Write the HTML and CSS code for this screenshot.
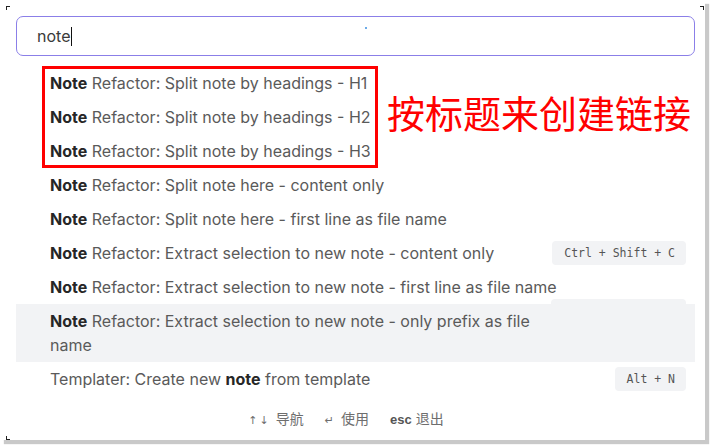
FILE: index.html
```html
<!DOCTYPE html>
<html>
<head>
<meta charset="utf-8">
<link rel="stylesheet" href="styles.css">
</head>
<body>
<div class="window">
  <span class="mark mark-tl"></span>
  <span class="mark mark-tr"></span>
  <span class="mark mark-bl"></span>
  <div class="search">
    <span class="query">note</span><span class="caret"></span>
    <span class="dot"></span>
  </div>
  <div class="list">
    <div class="item"><div class="text"><b>Note</b> Refactor: Split note by headings - H1</div></div>
    <div class="item"><div class="text"><b>Note</b> Refactor: Split note by headings - H2</div></div>
    <div class="item"><div class="text"><b>Note</b> Refactor: Split note by headings - H3</div></div>
    <div class="item"><div class="text"><b>Note</b> Refactor: Split note here - content only</div></div>
    <div class="item"><div class="text"><b>Note</b> Refactor: Split note here - first line as file name</div></div>
    <div class="item"><div class="text"><b>Note</b> Refactor: Extract selection to new note - content only</div><kbd class="key">Ctrl + Shift + C</kbd></div>
    <div class="item item-under"><div class="text nowrap"><b>Note</b> Refactor: Extract selection to new note - first line as file name</div><kbd class="key key-hidden"></kbd></div>
    <div class="item is-selected"><div class="text"><b>Note</b> Refactor: Extract selection to new note - only prefix as file name</div></div>
    <div class="item"><div class="text">Templater: Create new <b>note</b> from template</div><kbd class="key">Alt + N</kbd></div>
  </div>
  <div class="footer">
    <span class="hint"><span class="sym">↑↓</span>导航</span>
    <span class="hint"><span class="sym">↵</span>使用</span>
    <span class="hint"><b>esc</b>退出</span>
  </div>
  <div class="annot-box"></div>
  <div class="annot-text">按标题来创建链接</div>
</div>
</body>
</html>
```

FILE: styles.css
```css
html, body {
  margin: 0;
  padding: 0;
  background: #ffffff;
}
body {
  width: 712px;
  height: 447px;
  overflow: hidden;
  font-family: Inter, "Noto Sans CJK SC", sans-serif;
}
.window {
  position: relative;
  width: 705px;
  height: 440px;
  box-sizing: border-box;
  background: #ffffff;
  box-shadow: 4px 4px 1px #c9c9c9;
  padding: 16px 10px 0 16px;
}
.mark {
  position: absolute;
  width: 3px;
  height: 3px;
  border-color: #222;
  border-style: solid;
  border-width: 0;
}
.mark-tl { left: 6px; top: 6px; border-top-width: 1px; border-left-width: 1px; }
.mark-tr { left: 700px; top: 6px; border-top-width: 1px; border-right-width: 1px; }
.mark-bl { left: 6px; top: 436px; border-bottom-width: 1px; border-left-width: 1px; }

.search {
  position: relative;
  height: 40px;
  box-sizing: border-box;
  border: 1px solid #8b7fe8;
  border-radius: 7px;
  display: flex;
  align-items: center;
  padding-left: 20px;
  font-size: 16px;
  color: #3a3a3a;
}
.caret {
  display: inline-block;
  width: 1px;
  height: 19px;
  background: #111;
  margin-left: 1px;
}
.dot {
  position: absolute;
  left: 348px;
  top: 10px;
  width: 2px;
  height: 2px;
  border-radius: 50%;
  background: #3b8fe0;
}
.list {
  margin-top: 10px;
  display: flex;
  flex-direction: column;
}
.item {
  display: flex;
  align-items: flex-start;
  justify-content: space-between;
  padding: 5px 9px 5px 34px;
  font-size: 16px;
  line-height: 24px;
  color: #5a5a5a;
}
.item b {
  color: #262626;
  font-weight: 700;
}
.text {
  max-width: 500px;
}
.nowrap {
  white-space: nowrap;
}
.is-selected {
  background: #f2f3f5;
  position: relative;
}
.key {
  flex: none;
  font-family: "DejaVu Sans Mono", monospace;
  font-size: 11.5px;
  line-height: 24px;
  height: 24px;
  color: #555;
  background: #f2f3f5;
  border-radius: 4px;
  padding: 0 11px 0 12px;
}
.key-hidden {
  width: 112px;
  margin-top: 24px;
  margin-bottom: -29px;
}
.footer {
  display: flex;
  justify-content: center;
  gap: 21px;
  padding: 12px 19px 0 0;
  font-size: 14px;
  color: #6e6e6e;
  font-family: "Liberation Sans", "Noto Sans CJK SC", sans-serif;
}
.hint {
  display: flex;
  align-items: baseline;
}
.footer b {
  color: #555;
  font-size: 13px;
  margin-right: 4px;
}
.sym {
  font-family: "DejaVu Sans", sans-serif;
  font-size: 11px;
  letter-spacing: 2px;
  margin-right: 5px;
}
.annot-box {
  position: absolute;
  left: 42px;
  top: 66px;
  width: 336px;
  height: 102px;
  box-sizing: border-box;
  border: 3px solid #ff0000;
}
.annot-text {
  position: absolute;
  left: 387px;
  top: 88px;
  font-family: "Noto Sans CJK SC", sans-serif;
  font-size: 38px;
  line-height: 48px;
  color: #ff0000;
  white-space: nowrap;
}
```
